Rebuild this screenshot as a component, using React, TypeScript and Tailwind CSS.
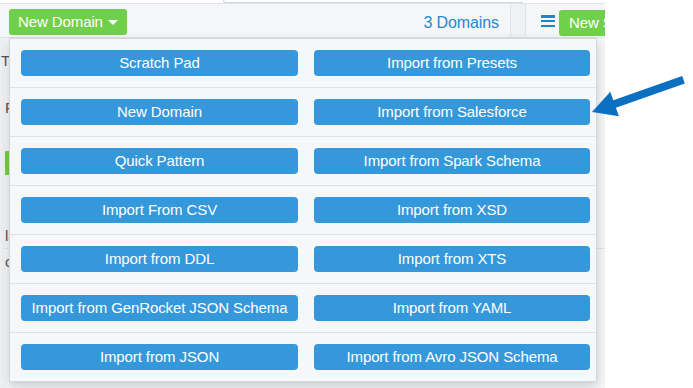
const leftItems = [
  "Scratch Pad",
  "New Domain",
  "Quick Pattern",
  "Import From CSV",
  "Import from DDL",
  "Import from GenRocket JSON Schema",
  "Import from JSON",
];

const rightItems = [
  "Import from Presets",
  "Import from Salesforce",
  "Import from Spark Schema",
  "Import from XSD",
  "Import from XTS",
  "Import from YAML",
  "Import from Avro JSON Schema",
];

const MenuButton = ({ label }: { label: string }) => (
  <button className="h-[26px] w-full rounded-[4px] bg-[#3598db] text-[15px] leading-[26px] tracking-[-0.1px] text-white">
    {label}
  </button>
);

const Arrow = () => (
  <svg
    className="absolute left-0 top-0 pointer-events-none"
    width="693"
    height="388"
    viewBox="0 0 693 388"
  >
    <polygon
      fill="#0b70c2"
      points="592,112 610.3,91.7 613.3,100.2 682.2,76 684.8,83.6 615.9,107.8 618.9,116.3"
    />
  </svg>
);

export default function App() {
  return (
    <div className="relative h-[388px] w-[693px] overflow-hidden bg-white font-['Liberation_Sans',Arial,sans-serif]">
      <div className="relative flex h-full w-[605px] flex-col overflow-hidden bg-[#f5f6f8]">
        {/* top input edge */}
        <div className="flex h-[3px] bg-white">
          <div className="w-[223px]" />
          <div className="w-[300px] rounded-bl-[3px] border-b border-l border-[#d5d8dc]" />
        </div>

        {/* header */}
        <div className="flex h-[35px] border-b border-t border-[#dfe2e6]">
          <div className="flex flex-1 items-start justify-between pl-[9px] pr-[11px] pt-[5px]">
            <button className="flex h-[26px] items-center gap-[5px] rounded-[3px] bg-[#71d04b] pl-[9px] pr-[9px] text-[15px] tracking-[-0.1px] text-white">
              New Domain
              <span className="h-0 w-0 border-l-[5px] border-r-[5px] border-t-[5px] border-l-transparent border-r-transparent border-t-white" />
            </button>
            <span className="mt-[2px] text-[16px] tracking-[-0.1px] text-[#1d8ad3]">3 Domains</span>
          </div>
          <div className="w-[16px] shrink-0 border-l border-r border-[#dfe2e6] bg-[#f0f1f4]" />
          <div className="flex w-[79px] shrink-0 items-start pl-[15px] pt-[6px]">
            <div className="mt-[5px] flex h-[12px] w-[14px] shrink-0 flex-col justify-between">
              <span className="h-[2.5px] bg-[#1b87cf]" />
              <span className="h-[2.5px] bg-[#1b87cf]" />
              <span className="h-[2.5px] bg-[#1b87cf]" />
            </div>
            <button className="ml-[4px] flex h-[26px] shrink-0 items-center whitespace-nowrap rounded-[3px] bg-[#71d04b] pl-[10px] pr-[10px] text-[15px] tracking-[-0.1px] text-white">
              New Schema
            </button>
          </div>
        </div>

        {/* page body behind the dropdown */}
        <div className="flex flex-1">
          <div className="w-[5px] bg-[#eef0f2]" />
          <div className="flex flex-1 flex-col text-[15px] text-[#555]">
            <div className="flex h-[47px] items-center -ml-[4px]">Tn</div>
            <div className="flex h-[46px] items-center">F</div>
            <div className="h-[20px]" />
            <div className="h-[24px] w-[40px] bg-[#71d04b]" />
            <div className="h-[50px]" />
            <div className="flex h-[24px] items-center border-b border-[#dfe2e6]">la</div>
            <div className="flex h-[26px] items-center">c</div>
            <div className="flex-1" />
          </div>
        </div>

        {/* dropdown menu */}
        <div className="absolute left-[9px] top-[38px] w-[588px] border border-[#d3d6da] bg-[#f6f7f9] shadow-[0_4px_10px_rgba(0,0,0,0.18)]">
          {leftItems.map((left, i) => (
            <div
              key={left}
              className={
                i < leftItems.length - 1
                  ? "grid grid-cols-[277px_276px] gap-[16px] border-b border-[#dfe1e4] pb-[11px] pl-[11px] pr-[6px] pt-[11px]"
                  : "grid grid-cols-[277px_276px] gap-[16px] pb-[11px] pl-[11px] pr-[6px] pt-[11px]"
              }
            >
              <MenuButton label={left} />
              <MenuButton label={rightItems[i]} />
            </div>
          ))}
        </div>
      </div>

      <Arrow />
    </div>
  );
}
